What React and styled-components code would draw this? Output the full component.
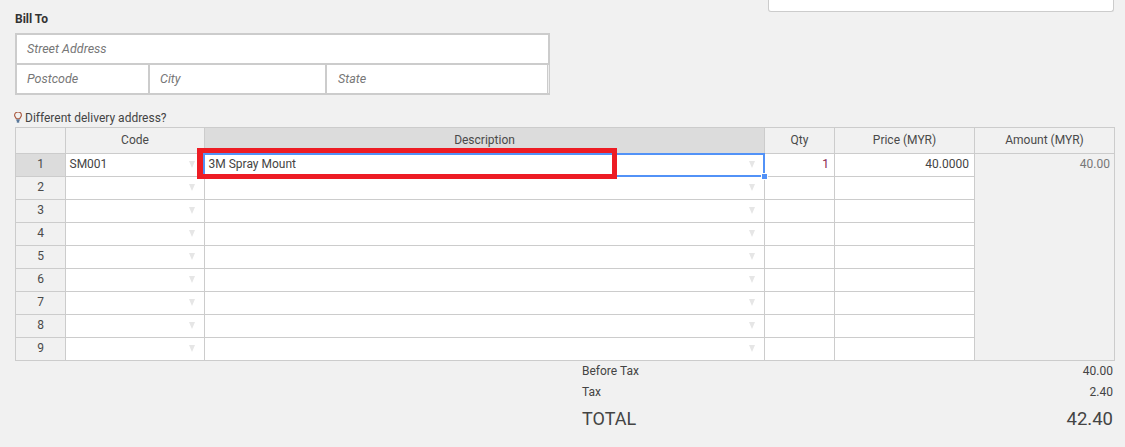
import React from 'react';
import styled, { createGlobalStyle } from 'styled-components';

const GlobalStyle = createGlobalStyle`
  html, body {
    margin: 0;
    padding: 0;
    background: #f1f1f1;
    font-family: Roboto, 'Liberation Sans', sans-serif;
    font-size: 12px;
    color: #333;
  }
  * { box-sizing: border-box; }
`;

const rows = [1, 2, 3, 4, 5, 6, 7, 8, 9];

const App = () => {
  return (
    <Page>
      <GlobalStyle />
      <TopRow>
        <BillTo>
          <BillTitle>Bill To</BillTitle>
          <AddressBox>
            <AddressLine>
              <AddressField>Street Address</AddressField>
            </AddressLine>
            <AddressLine>
              <AddressField $w={131}>Postcode</AddressField>
              <AddressField $w={175}>City</AddressField>
              <AddressField $notched>State</AddressField>
            </AddressLine>
          </AddressBox>
        </BillTo>
        <SideCard />
      </TopRow>

      <DeliveryLink>
        <BulbIcon width="8" height="11" viewBox="0 0 8 11" fill="none">
          <path d="M2.3 6.8C2.1 5.6 .6 4.9 .6 3.2A3.4 3.2 0 0 1 7.4 3.2C7.4 4.9 5.9 5.6 5.7 6.8Z" stroke="#a8553a" strokeWidth="1.1" />
          <path d="M2.4 8.2H5.6M2.8 9.8H5.2" stroke="#26507f" strokeWidth="1.3" />
        </BulbIcon>
        Different delivery address?
      </DeliveryLink>

      <Sheet>
        <HeadCell />
        <HeadCell>Code</HeadCell>
        <HeadCell $active>Description</HeadCell>
        <HeadCell>Qty</HeadCell>
        <HeadCell>Price (MYR)</HeadCell>
        <HeadCell>Amount (MYR)</HeadCell>

        {rows.map((n) => (
          <React.Fragment key={n}>
            <RowNum $active={n === 1}>{n}</RowNum>
            <Cell>
              <span>{n === 1 ? 'SM001' : ''}</span>
              <Arrow />
            </Cell>
            <Cell $selected={n === 1}>
              <span>{n === 1 ? '3M Spray Mount' : ''}</span>
              <Arrow />
              {n === 1 && <FillHandle />}
              {n === 1 && <RedMark />}
            </Cell>
            <NumCell $color="#8a1f4f">{n === 1 ? '1' : ''}</NumCell>
            <NumCell>{n === 1 ? '40.0000' : ''}</NumCell>
            {n === 1 && <AmountCell>40.00</AmountCell>}
          </React.Fragment>
        ))}
      </Sheet>

      <Totals>
        <TotalRow>
          <span>Before Tax</span>
          <span>40.00</span>
        </TotalRow>
        <TotalRow>
          <span>Tax</span>
          <span>2.40</span>
        </TotalRow>
        <GrandTotal>
          <span>TOTAL</span>
          <GrandValue>42.40</GrandValue>
        </GrandTotal>
      </Totals>
    </Page>
  );
};

export default App;

const Page = styled.main`
  width: 1125px;
  height: 447px;
  overflow: hidden;
  padding-left: 15px;
`;

const TopRow = styled.div`
  display: flex;
  justify-content: space-between;
  align-items: flex-start;
  height: 110px;
  padding-right: 11px;
`;

const BillTo = styled.section`
  width: 535px;
  padding-top: 12px;
`;

const BillTitle = styled.h4`
  margin: 0 0 7px;
  font-size: 12px;
  line-height: 14px;
  font-weight: 700;
  color: #333;
`;

const AddressBox = styled.div`
  display: flex;
  flex-direction: column;
  gap: 2px;
  height: 62px;
  border: 2px solid #ccc;
  background: #ccc;
`;

const AddressLine = styled.div`
  display: flex;
  flex: 1;
  gap: 2px;
`;

const AddressField = styled.div`
  ${(p) => (p.$w ? `width: ${p.$w}px;` : 'flex: 1;')}
  position: relative;
  display: flex;
  align-items: center;
  padding: 0 0 2px ${(p) => (p.$notched ? '11px' : '10px')};
  background: #fff;
  font-size: 12.5px;
  font-style: italic;
  color: #777;

  ${(p) =>
    p.$notched &&
    `
    border-right: 1px solid #ccc;
    &::after {
      content: '';
      position: absolute;
      top: 0;
      bottom: 0;
      right: -2px;
      width: 1px;
      background: #eee;
    }
  `}
`;

const SideCard = styled.div`
  width: 346px;
  height: 12px;
  background: #fff;
  border: 1px solid #ccc;
  border-top: 0;
  border-radius: 0 0 3px 3px;
`;

const DeliveryLink = styled.div`
  display: flex;
  align-items: center;
  gap: 3px;
  height: 15px;
  margin-bottom: 2px;
  color: #444;
  line-height: 14px;
`;

const BulbIcon = styled.svg`
  margin-left: -1px;
`;

const Sheet = styled.div`
  display: grid;
  grid-template-columns: 50px 139px 560px 70px 140px 140px;
  grid-template-rows: 26px repeat(9, 23px);
  width: 1100px;
  border-top: 1px solid #ccc;
  border-left: 1px solid #ccc;
`;

const HeadCell = styled.div`
  display: flex;
  align-items: center;
  justify-content: center;
  padding-bottom: 1px;
  background: ${(p) => (p.$active ? '#dcdcdc' : '#f1f1f1')};
  border-right: 1px solid #ccc;
  border-bottom: 1px solid #ccc;
  color: #4a4a4a;
`;

const RowNum = styled.div`
  display: flex;
  align-items: center;
  justify-content: center;
  padding-bottom: 2px;
  background: ${(p) => (p.$active ? '#dcdcdc' : '#f1f1f1')};
  border-right: 1px solid #ccc;
  border-bottom: 1px solid #ccc;
  color: #4a4a4a;
`;

const Cell = styled.div`
  position: relative;
  display: flex;
  align-items: center;
  justify-content: space-between;
  padding: 0 9px 2px 3.5px;
  background: #fff;
  border-right: 1px solid #ccc;
  border-bottom: 1px solid #ccc;
  color: #444;

  ${(p) =>
    p.$selected &&
    `
    z-index: 1;
    &::before {
      content: '';
      position: absolute;
      inset: -1px -1px -1px -2px;
      border: 2px solid #5292f7;
      pointer-events: none;
    }
  `}
`;

const Arrow = styled.i`
  display: block;
  width: 0;
  height: 0;
  border-left: 3.5px solid transparent;
  border-right: 3.5px solid transparent;
  border-top: 7px solid #e6e6e6;
`;

const FillHandle = styled.b`
  position: absolute;
  right: -4px;
  bottom: -4px;
  width: 7px;
  height: 7px;
  background: #5292f7;
  border: 1px solid #fff;
`;

const RedMark = styled.div`
  position: absolute;
  left: -8px;
  top: -6px;
  width: 420px;
  height: 31px;
  border: 5px solid #ed1c24;
  border-left-width: 6px;
  pointer-events: none;
`;

const NumCell = styled.div`
  display: flex;
  align-items: center;
  justify-content: flex-end;
  padding: 0 5px 2px 0;
  background: #fff;
  border-right: 1px solid #ccc;
  border-bottom: 1px solid #ccc;
  color: ${(p) => p.$color || '#444'};
`;

const AmountCell = styled.div`
  grid-column: 6;
  grid-row: 2 / span 9;
  padding: 3px 4px 0 0;
  line-height: 14px;
  text-align: right;
  background: #f1f1f1;
  border-right: 1px solid #ccc;
  border-bottom: 1px solid #ccc;
  color: #777;
`;

const Totals = styled.section`
  width: 531px;
  margin-left: 567px;
`;

const TotalRow = styled.div`
  display: flex;
  justify-content: space-between;
  height: 21px;
  line-height: 20px;
  color: #444;
`;

const GrandTotal = styled.div`
  display: flex;
  justify-content: space-between;
  align-items: center;
  height: 31px;
  font-size: 18px;
  color: #444;
`;

const GrandValue = styled.span`
  font-size: 18.5px;
`;
